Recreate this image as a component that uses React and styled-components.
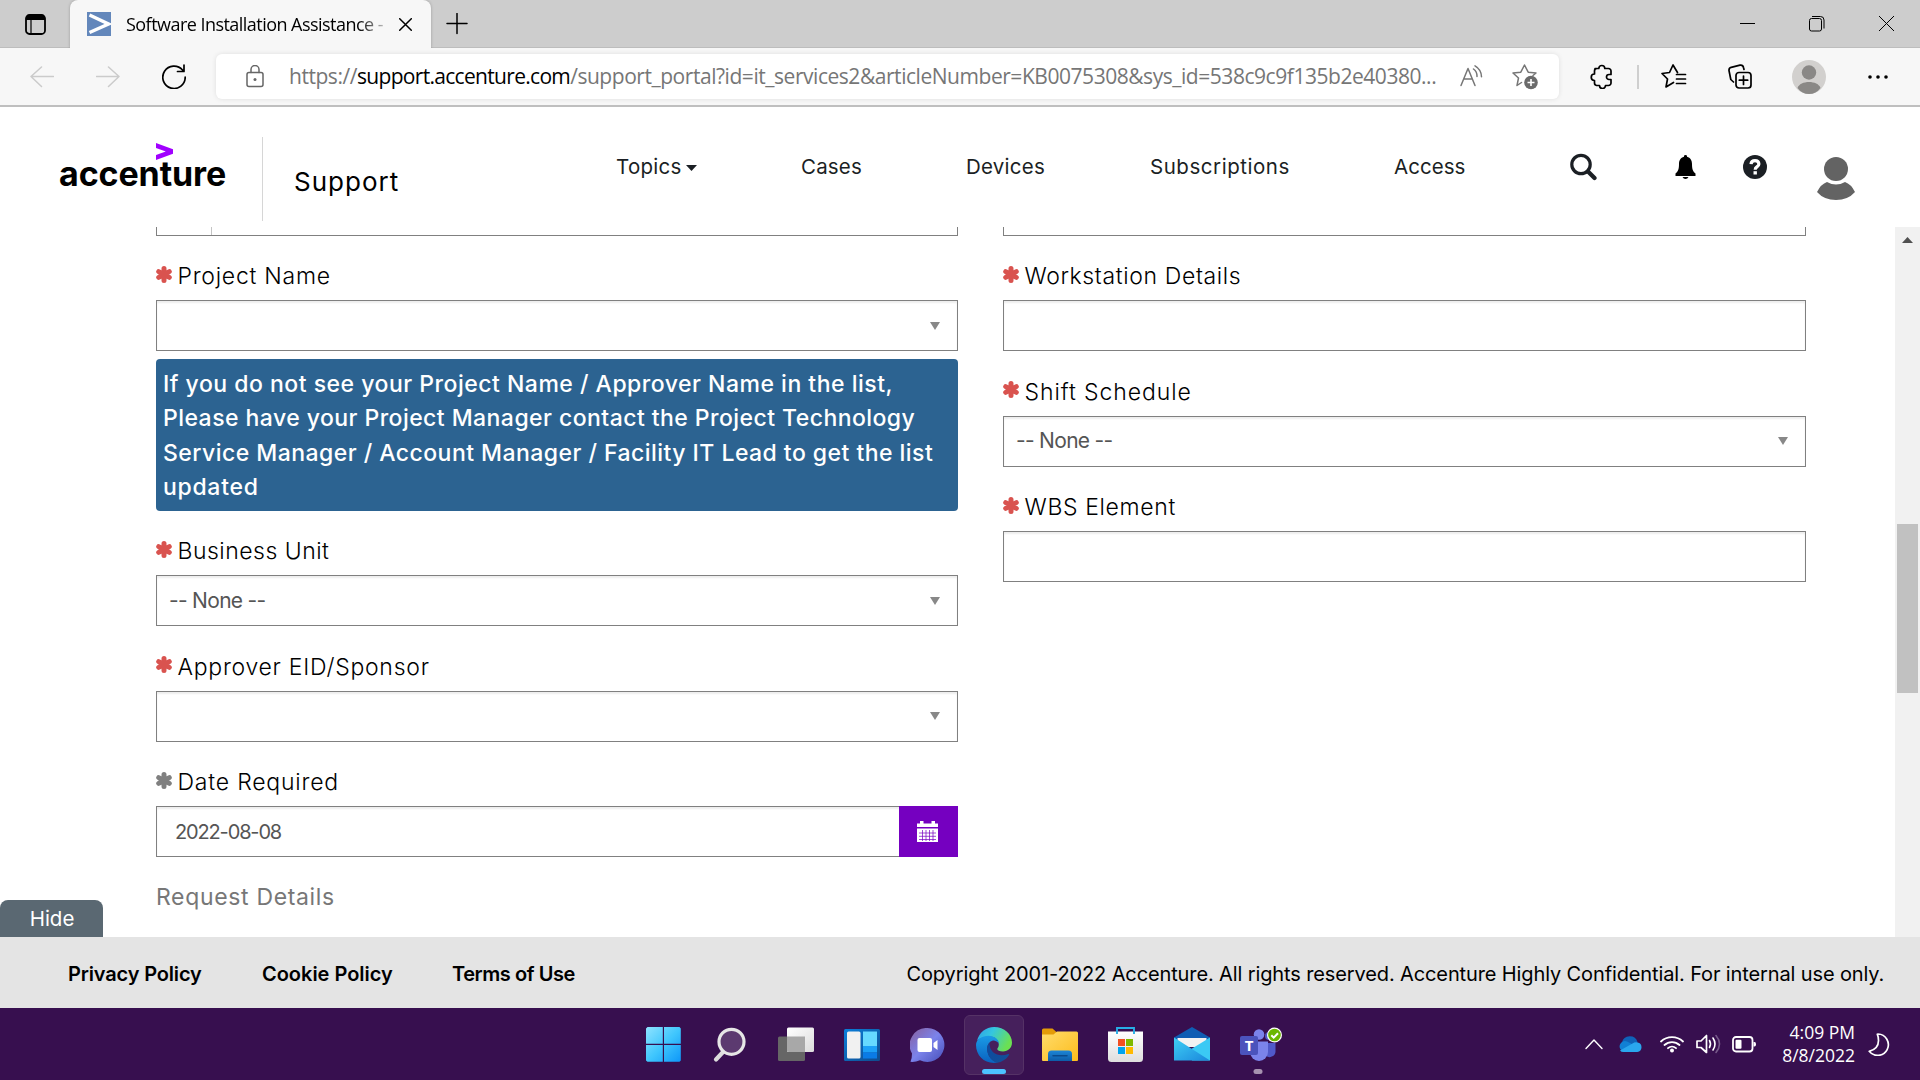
import React from "react";
import styled, { createGlobalStyle } from "styled-components";

const ui = `Inter, "Liberation Sans", sans-serif`;
const system = `"Open Sans", "Noto Sans", sans-serif`;

const GlobalStyle = createGlobalStyle`
  *, *::before, *::after { box-sizing: border-box; }
  body { margin: 0; background: #fff; overflow: hidden; }
  svg { display: block; flex: none; }
`;

const Screen = styled.div`
  width: 1920px;
  height: 1080px;
  display: flex;
  flex-direction: column;
  overflow: hidden;
  background: #fff;
  font-family: ${ui};
  color: #000;
`;

const Slot = styled.div`
  flex: none;
  display: flex;
  align-items: center;
  margin-left: ${(p) => p.$gap || 0}px;
`;

/* Browser chrome */

const TabStrip = styled.div`
  height: 48px;
  flex: none;
  display: flex;
  align-items: stretch;
  background: #cdcdcd;
  box-shadow: inset 0 -1px 0 #bdbdbd;
  padding-left: 25px;
`;

const Tab = styled.div`
  width: 361px;
  margin-left: 24px;
  display: flex;
  align-items: center;
  padding-left: 17px;
  background: #f7f7f7;
  border-radius: 8px 8px 0 0;
  box-shadow: 0 0 3px rgba(0, 0, 0, 0.25);
  clip-path: inset(0 -4px 0 -4px);
`;

const Favicon = styled.div`
  width: 24px;
  height: 24px;
  background: #6387bb;
`;

const TabTitle = styled.div`
  width: 260px;
  margin-left: 15px;
  padding-bottom: 1px;
  font: 400 18px/24px ${system};
  letter-spacing: -0.537px;
  white-space: nowrap;
  mask-image: linear-gradient(90deg, #000 232px, transparent 266px);
`;

const WindowButtons = styled.div`
  margin-left: auto;
  display: flex;
  align-items: center;
  gap: 54px;
  padding: 0 26px 1px 0;
`;

const Toolbar = styled.div`
  height: 59px;
  flex: none;
  display: flex;
  align-items: center;
  background: #f7f7f7;
  border-bottom: 2px solid #bfbfbf;
  padding-left: 30px;
`;

const AddressBar = styled.div`
  width: 1343px;
  height: 45px;
  margin-left: 30px;
  display: flex;
  align-items: center;
  padding-left: 30px;
  background: #fff;
  border-radius: 6px;
  box-shadow: 0 0 5px rgba(0, 0, 0, 0.1);
`;

const Url = styled.div`
  width: 1147px;
  flex: none;
  margin-left: 25px;
  padding-bottom: 1px;
  white-space: nowrap;
  font: 400 21px/30px ${system};
  letter-spacing: -0.457px;
  color: #767676;
`;

const Host = styled.span`
  color: #000;
  letter-spacing: -0.69px;
`;

const Divider = styled.div`
  width: 2px;
  height: 24px;
  margin-left: 23px;
  background: #cfcfcf;
`;

/* Site header */

const Header = styled.header`
  height: 120px;
  flex: none;
  display: flex;
  padding-left: 59px;
`;

const Logo = styled.div`
  width: 203px;
  padding-top: 36px;
  display: flex;
  flex-direction: column;
`;

const LogoMark = styled.svg`
  margin-left: 97px;
`;

const LogoWord = styled.div`
  font: 700 34px/28px ${ui};
  letter-spacing: -0.1px;
`;

const SiteName = styled.div`
  width: 354px;
  height: 84px;
  margin-top: 30px;
  padding-left: 31px;
  border-left: 1px solid #d6d6d6;
  font: 400 26px/90px ${ui};
  letter-spacing: 1px;
`;

const Nav = styled.nav`
  height: 119px;
  display: flex;
  align-items: center;
`;

const NavItem = styled.a`
  width: ${(p) => p.$width}px;
  display: flex;
  align-items: center;
  gap: 4px;
  font: 380 20.5px/30px ${ui};
  letter-spacing: ${(p) => p.$spacing}px;
  color: #1b1f24;
`;

const Caret = styled.svg`
  margin-top: 3px;
`;

const UserIcon = styled.svg`
  margin-top: 24px;
`;

/* Form */

const Content = styled.main`
  height: 710px;
  flex: none;
  display: flex;
  overflow: hidden;
`;

const Form = styled.div`
  width: 1895px;
  padding: 0 89px 0 156px;
  display: grid;
  grid-template-columns: 802px 803px;
  column-gap: 45px;
  align-items: start;
`;

const Column = styled.div`
  display: flex;
  flex-direction: column;
`;

const ClippedField = styled.div`
  height: 8.5px;
  border: 1px solid #808080;
  border-top: 0;
  display: flex;
`;

const ClippedAddon = styled.div`
  width: 55px;
  border-right: 1px solid #c4c4c4;
`;

const Field = styled.div`
  height: 115.5px;
  display: flex;
  flex-direction: column;
`;

const Label = styled.label`
  height: 64.5px;
  padding: 25.5px 0 9px;
  display: flex;
  gap: 5.5px;
  font: 350 23px/30px ${ui};
  letter-spacing: ${(p) => p.$spacing}px;
`;

const Asterisk = styled.svg`
  margin-top: 4.5px;
`;

const Control = styled.div`
  height: 51px;
  display: flex;
  align-items: center;
  justify-content: space-between;
  padding: 0 17px 0 12px;
  border: 1px solid #808080;
  box-shadow: inset 0 2px 2px rgba(0, 0, 0, 0.07);
  font: 400 21px/30px ${ui};
  letter-spacing: -0.7px;
  color: #555;
`;

const DateControl = styled(Control)`
  padding: 0 0 0 18px;
  font-size: 20px;
  letter-spacing: -1.15px;
`;

const DateButton = styled.div`
  width: 59px;
  height: 51px;
  margin: 0 -1px;
  padding-right: 2px;
  display: flex;
  align-items: center;
  justify-content: center;
  background: #7500c0;
`;

const Notice = styled.div`
  height: 151.5px;
  margin-top: 8px;
  padding: 8.2px 0 0 7px;
  border-radius: 4px;
  background: #2c6391;
  color: #fff;
`;

const NoticeLine = styled.div`
  white-space: nowrap;
  font: 500 23px/34.3px ${ui};
  letter-spacing: ${(p) => p.$spacing}px;
`;

const SectionTitle = styled.div`
  padding-top: 25px;
  font: 380 23px/30px ${ui};
  letter-spacing: 0.66px;
  color: #777;
`;

const ScrollTrack = styled.div`
  width: 25px;
  display: flex;
  flex-direction: column;
  align-items: center;
  padding-top: 10px;
  background: #f1f1f1;
`;

const ScrollThumb = styled.div`
  width: 21px;
  height: 169px;
  margin-top: 281px;
  background: #c1c1c1;
`;

/* Footer */

const Footer = styled.footer`
  position: relative;
  height: 71px;
  flex: none;
  display: flex;
  align-items: center;
  padding: 2px 0 0 68px;
  background: #e4e4e4;
`;

const HideTab = styled.div`
  position: absolute;
  left: 0;
  bottom: 100%;
  width: 103px;
  height: 37px;
  padding-left: 1px;
  border-radius: 8px 8px 0 0;
  background: #5a6872;
  color: #fff;
  text-align: center;
  font: 400 20.5px/37px ${ui};
`;

const FooterLink = styled.a`
  width: ${(p) => p.$width}px;
  white-space: nowrap;
  font: 600 20px/30px ${ui};
  letter-spacing: ${(p) => p.$spacing}px;
`;

const Copyright = styled.div`
  margin-left: auto;
  width: 1013.5px;
  white-space: nowrap;
  font: 380 20px/30px ${ui};
  letter-spacing: -0.12px;
`;

/* Taskbar */

const Taskbar = styled.div`
  height: 72px;
  flex: none;
  display: flex;
  align-items: center;
  background: #370f4f;
`;

const Apps = styled.div`
  display: flex;
  gap: 6px;
  margin-left: 634px;
`;

const AppButton = styled.div`
  position: relative;
  width: 60px;
  height: 60px;
  margin-top: 2px;
  display: flex;
  align-items: center;
  justify-content: center;
  border-radius: 6px;
  border: 1px solid ${(p) => (p.$active ? "#553266" : "transparent")};
  background: ${(p) => (p.$active ? "#46205c" : "transparent")};
`;

const Running = styled.div`
  position: absolute;
  left: 50%;
  bottom: 0;
  width: ${(p) => (p.$active ? 24 : 9)}px;
  height: 5px;
  transform: translateX(-50%);
  border-radius: 3px;
  background: ${(p) => (p.$active ? "#4cc2ff" : "#a692b0")};
`;

const TeamsArt = styled.svg`
  margin: -2px -7px 0 0;
`;

const TeamsLetter = styled.div`
  position: absolute;
  left: 11px;
  top: 20px;
  width: 18px;
  height: 19px;
  border-radius: 2px;
  background: #4b53bc;
  color: #fff;
  text-align: center;
  font: 700 15px/19px ${system};
`;

const Tray = styled.div`
  margin-left: auto;
  padding-right: 30px;
  display: flex;
  align-items: center;
`;

const Clock = styled.div`
  width: 99px;
  padding-bottom: 1px;
  text-align: right;
  font: 400 17.5px/23px ${system};
  color: #fff;
`;

const stroke = (color, width = 1.5) => ({
  fill: "none",
  stroke: color,
  strokeWidth: width,
  strokeLinecap: "round",
  strokeLinejoin: "round",
});

const Caption = ({ children, spacing, optional }) => (
  <Label $spacing={spacing}>
    <Asterisk width="16" height="17" viewBox="0 0 16 17">
      <path
        d="M8 2.6V14.4M2.700 5.600L13.300 11.400M13.300 5.600L2.700 11.400"
        stroke={optional ? "#808080" : "#d9534f"}
        strokeWidth="5"
        strokeLinecap="round"
      />
    </Asterisk>
    {children}
  </Label>
);

const Arrow = () => (
  <svg width="10" height="8" viewBox="0 0 10 8">
    <path d="M0 0H10L5 8Z" fill="#888" />
  </svg>
);

function BrowserTabs() {
  return (
    <TabStrip>
      <Slot>
        <svg width="21" height="21" viewBox="0 0 21 21">
          <rect x="1" y="1" width="19" height="19" rx="3.5" {...stroke("#000", 1.8)} />
          <path d="M1 4.5a3.5 3.5 0 0 1 3.500-3.500h12a3.500 3.500 0 0 1 3.500 3.500V6H1Z" fill="#000" />
          <path d="M6 6V20" stroke="#000" strokeWidth="1.2" />
        </svg>
      </Slot>
      <Tab>
        <Favicon>
          <svg width="24" height="24" viewBox="0 0 24 24">
            <path d="M2.500 3L21.500 12L2.500 20.500" fill="none" stroke="#fff" strokeWidth="3.400" />
          </svg>
        </Favicon>
        <TabTitle>Software Installation Assistance -</TabTitle>
        <Slot $gap={13}>
          <svg width="13" height="13" viewBox="0 0 13 13">
            <path d="M.7.7L12.300 12.300M12.300.7L.7 12.300" {...stroke("#000", 1.500)} />
          </svg>
        </Slot>
      </Tab>
      <Slot $gap={15}>
        <svg width="22" height="22" viewBox="0 0 22 22">
          <path d="M11 .500V20.500M1 10.500H21" {...stroke("#000", 1.500)} />
        </svg>
      </Slot>
      <WindowButtons>
        <svg width="15" height="15" viewBox="0 0 15 15">
          <path d="M0 7.500H15" stroke="#000" strokeWidth="1" />
        </svg>
        <svg width="16" height="16" viewBox="0 0 16 16">
          <rect x=".5" y="2.500" width="12" height="12.500" rx="2" fill="none" stroke="#000" />
          <path d="M3 .500H11.500a3.500 3.500 0 0 1 3.500 3.500V12.500" fill="none" stroke="#000" />
        </svg>
        <svg width="15" height="15" viewBox="0 0 15 15">
          <path d="M0 0L15 15M15 0L0 15" stroke="#000" strokeWidth="1" />
        </svg>
      </WindowButtons>
    </TabStrip>
  );
}

function BrowserToolbar() {
  return (
    <Toolbar>
      <svg width="24" height="22" viewBox="0 0 24 22">
        <path d="M11.500 1L1 10.500L11.500 20.500M1 10.500H23.500" {...stroke("#cbcbcb")} />
      </svg>
      <Slot $gap={42}>
        <svg width="24" height="22" viewBox="0 0 24 22">
          <path d="M12.500 1L23 10.500L12.500 20.500M23 10.500H.500" {...stroke("#cbcbcb")} />
        </svg>
      </Slot>
      <Slot $gap={42}>
        <svg width="24" height="25" viewBox="0 0 24 25">
          <path d="M20.500 6A11.200 11.200 0 1 0 23.200 13M22 1V7.500H15.500" {...stroke("#000", 1.700)} />
        </svg>
      </Slot>
      <AddressBar>
        <svg width="18" height="23" viewBox="0 0 18 23">
          <rect x="1" y="7.500" width="16" height="14" rx="2" {...stroke("#666")} />
          <path d="M5 7.500V4.500a4 4 0 0 1 8 0V7.500" {...stroke("#666")} />
          <circle cx="9" cy="14.500" r="1.500" fill="#666" />
        </svg>
        <Url>
          https://<Host>support.accenture.com</Host>
          /support_portal?id=it_services2&amp;articleNumber=KB0075308&amp;sys_id=538c9c9f135b2e40380...
        </Url>
        <Slot $gap={24}>
          <svg width="23" height="23" viewBox="0 0 23 23">
            <path d="M1 20.500L8 3.500L15 20.500M3.700 14H12.300" {...stroke("#767676")} />
            <path d="M13.500 4a9 9 0 0 1 3.500 7.500M15 .8a13 13 0 0 1 6.500 11" {...stroke("#767676")} />
          </svg>
        </Slot>
        <Slot $gap={29}>
          <svg width="27" height="26" viewBox="0 0 27 26">
            <path d="M9.500 18.500L5 21.500L6.500 14L1 9L8.800 8.200L12.500 1L16.200 8.200L24 9L21 11.500" {...stroke("#767676")} />
            <circle cx="19" cy="18.500" r="6.800" fill="#6a6a6a" />
            <path d="M19 15V22M15.500 18.500H22.500" stroke="#fff" strokeWidth="1.600" />
          </svg>
        </Slot>
      </AddressBar>
      <Slot $gap={31}>
        <svg width="24" height="25" viewBox="0 0 24 25">
          <path
            d="M5 4.500H8.800a3 3 0 0 1 6 0H18.500a2.500 2.500 0 0 1 2.500 2.500V10.500H19a2.200 2.200 0 0 0 0 5H21V19a2.500 2.500 0 0 1-2.500 2.500H15.500a3 3 0 0 1-6 0H6.500A2.500 2.500 0 0 1 4.500 19V16.500a3.200 3.200 0 0 1 0-6.500V7Q4.500 4.500 7 4.500"
            {...stroke("#000", 1.700)}
          />
        </svg>
      </Slot>
      <Divider />
      <Slot $gap={22}>
        <svg width="26" height="25" viewBox="0 0 26 25">
          <path d="M16.500 8.500L12 1L8.500 8.500L1 9.500L6.500 15L5 23L12.500 18.500M15.500 10.500H24.500M15.500 15H24.500M15.500 19.500H24.500" {...stroke("#000", 1.700)} />
        </svg>
      </Slot>
      <Slot $gap={41}>
        <svg width="24" height="25" viewBox="0 0 24 25">
          <rect x="8" y="8.500" width="15" height="15.500" rx="3" {...stroke("#000", 1.700)} />
          <path d="M15.500 12V20.500M11.300 16.200H19.700M5.500 18L2.800 15.500L1 6.500Q.8 4 3.200 3.300L12 1.200Q15 .8 15.500 3.500L16 5.500" {...stroke("#000", 1.700)} />
        </svg>
      </Slot>
      <Slot $gap={40}>
        <svg width="34" height="34" viewBox="0 0 34 34">
          <circle cx="17" cy="17" r="17" fill="#d2d0ce" />
          <circle cx="17" cy="12.500" r="7.200" fill="#8a8886" />
          <path d="M5.500 28C8 20 26 20 28.500 28Q24 34 17 34T5.500 28Z" fill="#8a8886" />
        </svg>
      </Slot>
      <Slot $gap={42}>
        <svg width="20" height="4" viewBox="0 0 20 4">
          <circle cx="2" cy="2" r="1.800" />
          <circle cx="10" cy="2" r="1.800" />
          <circle cx="18" cy="2" r="1.800" />
        </svg>
      </Slot>
    </Toolbar>
  );
}

function SiteHeader() {
  return (
    <Header>
      <Logo>
        <LogoMark width="17" height="17" viewBox="0 0 17 17">
          <path d="M0 0L17 6.300V10.700L0 17V12L9.800 8.500L0 5Z" fill="#a100ff" />
        </LogoMark>
        <LogoWord>accenture</LogoWord>
      </Logo>
      <SiteName>Support</SiteName>
      <Nav>
        <NavItem $width={185} $spacing={0.27}>
          Topics
          <Caret width="11" height="6" viewBox="0 0 11 6">
            <path d="M0 0H11L5.500 6Z" fill="#1b1f24" />
          </Caret>
        </NavItem>
        <NavItem $width={165} $spacing={0.18}>Cases</NavItem>
        <NavItem $width={184} $spacing={0.25}>Devices</NavItem>
        <NavItem $width={244} $spacing={0.54}>Subscriptions</NavItem>
        <NavItem $width={176} $spacing={0.03}>Access</NavItem>
        <svg width="27" height="29" viewBox="0 0 27 29">
          <circle cx="11" cy="12.500" r="9.200" fill="none" stroke="#1b1f24" strokeWidth="3.200" />
          <path d="M18 19.500L24.500 26" stroke="#1b1f24" strokeWidth="4.200" strokeLinecap="round" />
        </svg>
        <Slot $gap={78}>
          <svg width="21" height="24" viewBox="0 0 21 24">
            <path d="M10.500 0a1.500 1.500 0 0 1 1.500 1.700C15.500 2.500 17 5.500 17 9C17 14.500 18 16.500 20.500 18.500V21H.500V18.500C3 16.500 4 14.500 4 9C4 5.500 5.500 2.500 9 1.700A1.500 1.500 0 0 1 10.500 0ZM7.500 22H13.500Q12.500 24 10.500 24T7.500 22Z" />
          </svg>
        </Slot>
        <Slot $gap={47}>
          <svg width="24" height="24" viewBox="0 0 24 24">
            <circle cx="12" cy="12" r="12" fill="#1b1f24" />
            <path d="M8 9.200Q8.300 5.700 12 5.700T15.900 9Q15.900 10.800 13.800 12Q12.200 12.900 12.200 14.800" fill="none" stroke="#fff" strokeWidth="3.200" />
            <path d="M10.500 16.200H13.900V19.500H10.500Z" fill="#fff" />
          </svg>
        </Slot>
        <Slot $gap={50}>
          <UserIcon width="38" height="43" viewBox="0 0 38 43">
            <circle cx="19" cy="12" r="12" fill="#636363" />
            <path d="M10 25Q19 30 28 25Q34 27 38 35Q31 43 19 43T0 35Q4 27 10 25Z" fill="#636363" />
          </UserIcon>
        </Slot>
      </Nav>
    </Header>
  );
}

const notice = [
  ["If you do not see your Project Name / Approver Name in the list,", 0.5],
  ["Please have your Project Manager contact the Project Technology", 0.445],
  ["Service Manager / Account Manager / Facility IT Lead to get the list", 0.46],
  ["updated", 0.7],
];

function RequestForm() {
  return (
    <Content>
      <Form>
        <Column>
          <ClippedField>
            <ClippedAddon />
          </ClippedField>
          <Field>
            <Caption spacing={0.75}>Project Name</Caption>
            <Control>
              <span />
              <Arrow />
            </Control>
          </Field>
          <Notice>
            {notice.map(([text, spacing]) => (
              <NoticeLine key={text} $spacing={spacing}>{text}</NoticeLine>
            ))}
          </Notice>
          <Field>
            <Caption spacing={0.5}>Business Unit</Caption>
            <Control>
              -- None --
              <Arrow />
            </Control>
          </Field>
          <Field>
            <Caption spacing={0.74}>Approver EID/Sponsor</Caption>
            <Control>
              <span />
              <Arrow />
            </Control>
          </Field>
          <Field>
            <Caption spacing={0.8} optional>Date Required</Caption>
            <DateControl>
              2022-08-08
              <DateButton>
                <svg width="21" height="22" viewBox="0 0 21 22">
                  <path d="M0 2.500H3V0H6.500V2.500H14.500V0H18V2.500H21V6H0ZM0 7.500H21V21H0Z" fill="#fff" />
                  <path d="M2 12H19M2 15.300H19M2 18.500H19M5.500 9V20M9 9V20M12.500 9V20M16 9V20" stroke="#7500c0" strokeWidth=".7" />
                </svg>
              </DateButton>
            </DateControl>
          </Field>
          <SectionTitle>Request Details</SectionTitle>
        </Column>
        <Column>
          <ClippedField />
          <Field>
            <Caption spacing={0.63}>Workstation Details</Caption>
            <Control />
          </Field>
          <Field>
            <Caption spacing={0.9}>Shift Schedule</Caption>
            <Control>
              -- None --
              <Arrow />
            </Control>
          </Field>
          <Field>
            <Caption spacing={0.65}>WBS Element</Caption>
            <Control />
          </Field>
        </Column>
      </Form>
      <ScrollTrack>
        <svg width="11" height="6" viewBox="0 0 11 6">
          <path d="M5.500 0L11 6H0Z" fill="#505050" />
        </svg>
        <ScrollThumb />
      </ScrollTrack>
    </Content>
  );
}

function SiteFooter() {
  return (
    <Footer>
      <HideTab>Hide</HideTab>
      <FooterLink $width={194} $spacing={-0.16}>Privacy Policy</FooterLink>
      <FooterLink $width={190} $spacing={-0.02}>Cookie Policy</FooterLink>
      <FooterLink $width={140} $spacing={-0.44}>Terms of Use</FooterLink>
      <Copyright>
        Copyright 2001-2022 Accenture. All rights reserved. Accenture Highly Confidential. For internal use only.
      </Copyright>
    </Footer>
  );
}

const StartIcon = () => (
  <svg width="36" height="36" viewBox="0 0 36 36">
    <defs>
      <linearGradient id="start" x1="0" y1="0" x2="36" y2="36" gradientUnits="userSpaceOnUse">
        <stop offset="0" stopColor="#8fe3ff" />
        <stop offset=".5" stopColor="#3fc6fd" />
        <stop offset="1" stopColor="#0a93f8" />
      </linearGradient>
    </defs>
    <path d="M1.500 0H16.800V16.800H0V1.500ZM18 0H33.500L34.800 1.500V16.800H18ZM0 18H16.800V34.800H1.500L0 33.500ZM18 18H34.800V33.500L33.500 34.800H18Z" fill="url(#start)" />
  </svg>
);

const SearchIcon = () => (
  <svg width="34" height="36" viewBox="0 0 34 36">
    <path d="M10.500 24.500L3 32.500" stroke="#dcdcdc" strokeWidth="4.200" strokeLinecap="round" />
    <circle cx="18.500" cy="14.800" r="12.500" fill="#5c3a70" stroke="#e6e6e6" strokeWidth="3.200" />
  </svg>
);

const TaskViewIcon = () => (
  <svg width="36" height="36" viewBox="0 0 36 36">
    <defs>
      <linearGradient id="pane" x1="0" y1="0" x2="1" y2="1">
        <stop offset="0" stopColor="#fff" />
        <stop offset="1" stopColor="#dcdcdc" />
      </linearGradient>
    </defs>
    <rect x="0" y="9.500" width="27" height="24.500" rx="1.500" fill="#666" />
    <rect x="9" y=".5" width="27" height="24.500" rx="1.500" fill="url(#pane)" />
    <path d="M9 9.500H27V25H10.500L9 23.500Z" fill="#a8a8a8" />
  </svg>
);

const WidgetsIcon = () => (
  <svg width="36" height="32" viewBox="0 0 36 32">
    <defs>
      <linearGradient id="board" x1="0" y1="0" x2="1" y2="1">
        <stop offset="0" stopColor="#0a7fdb" />
        <stop offset="1" stopColor="#104a8c" />
      </linearGradient>
    </defs>
    <rect width="36" height="32" rx="1.500" fill="url(#board)" />
    <rect x="3" y="2.500" width="13.500" height="27" rx="1.500" fill="#f1f1f1" />
    <path d="M19 2.500H33V17H19Z" fill="#66d9ff" />
    <path d="M19 17H33V23.500H19Z" fill="#1ca0f7" />
    <path d="M19 23.500H33V29.500H19Z" fill="#0a7be6" />
  </svg>
);

const ChatIcon = () => (
  <svg width="36" height="35" viewBox="0 0 36 35">
    <defs>
      <linearGradient id="chat" x1="0" y1="0" x2="1" y2="1">
        <stop offset="0" stopColor="#8a5f9e" />
        <stop offset=".25" stopColor="#8171c4" />
        <stop offset=".5" stopColor="#7b83eb" />
        <stop offset="1" stopColor="#464eb8" />
      </linearGradient>
    </defs>
    <path d="M17.500 0A17 17 0 1 1 10 32.300Q5 34.300.500 33.800Q2 30.500 2 25.500A17 17 0 0 1 17.500 0Z" fill="url(#chat)" />
    <rect x="7.500" y="10" width="14.500" height="14" rx="2" fill="#fff" />
    <path d="M23.500 15L27.500 12V22L23.500 19Z" fill="#fff" />
  </svg>
);

const EdgeIcon = () => (
  <svg width="36" height="36" viewBox="0 0 36 36">
    <defs>
      <linearGradient id="edgeTop" x1="0" y1="0" x2="1" y2=".4">
        <stop offset="0" stopColor="#2f9de8" />
        <stop offset=".45" stopColor="#34c6e0" />
        <stop offset="1" stopColor="#6be053" />
      </linearGradient>
      <linearGradient id="edgeLeft" x1="0" y1="0" x2="0" y2="1">
        <stop offset="0" stopColor="#1a9be6" />
        <stop offset="1" stopColor="#0a62c0" />
      </linearGradient>
      <linearGradient id="edgeDark" x1="0" y1="0" x2="1" y2="1">
        <stop offset="0" stopColor="#0c4aa0" />
        <stop offset="1" stopColor="#124f98" />
      </linearGradient>
    </defs>
    <path d="M1 14C3 5.500 10 0 18 0C28.500 0 36 7.500 36 15.500C36 21 32 24.500 27 24.500C23.500 24.500 21.300 23.400 21.300 22C21.300 21 22.800 20.300 22.800 17.500C22.800 13 18.500 9.500 13.500 9.500C7 9.500 1.500 12.500 1 14Z" fill="url(#edgeTop)" />
    <path d="M0 18C0 12.500 6 8.800 12.500 8.800C18.500 8.800 22.800 12.500 22.800 16.500C21 14 18.500 13.300 17 13.500C12.500 14.500 10.500 19 11.500 24.500C12.500 30 17 35 22 35.500C10 38 0 29.500 0 18Z" fill="url(#edgeLeft)" />
    <path d="M13.500 15.500C8.500 21 11.500 32 20.500 35.800C26 35.500 31 31.500 33 28C33.400 27.200 32.900 26.700 32.100 27C24 30.500 13 27 13.500 15.500Z" fill="url(#edgeDark)" />
  </svg>
);

const FolderIcon = () => (
  <svg width="36" height="34" viewBox="0 0 36 34">
    <defs>
      <linearGradient id="folder" x1="0" y1="0" x2="1" y2="1">
        <stop offset="0" stopColor="#ffdc6b" />
        <stop offset="1" stopColor="#fdbc1c" />
      </linearGradient>
      <linearGradient id="tray" x1="0" y1="0" x2="0" y2="1">
        <stop offset="0" stopColor="#1d86d6" />
        <stop offset="1" stopColor="#0d5ca8" />
      </linearGradient>
    </defs>
    <path d="M0 2Q0 .500 1.500.500H10.500L15 4.500V12H0Z" fill="#e39b08" />
    <path d="M0 6.500H11.500L15 3.500H34.500Q36 3.500 36 5V32Q36 33 35 33H1Q0 33 0 32Z" fill="url(#folder)" />
    <path d="M6 33V26Q6 22.500 9.500 22.500H26.500Q30 22.500 30 26V33Z" fill="url(#tray)" />
    <path d="M11 27.800H25" stroke="#0a4a8c" strokeWidth="1.500" strokeLinecap="round" />
  </svg>
);

const StoreIcon = () => (
  <svg width="36" height="36" viewBox="0 0 36 36">
    <defs>
      <linearGradient id="bag" x1="0" y1="0" x2="0" y2="1">
        <stop offset="0" stopColor="#fff" />
        <stop offset="1" stopColor="#dedede" />
      </linearGradient>
    </defs>
    <path d="M0 4.500H35V31.500Q35 35 31.500 35H3.500Q0 35 0 31.500Z" fill="url(#bag)" />
    <path d="M9 7V1H26V7" fill="none" stroke="#27aee6" strokeWidth="1.900" />
    <path d="M10 12H17V19H10Z" fill="#f25022" />
    <path d="M18 12H25V19H18Z" fill="#7fba00" />
    <path d="M10 20H17V27H10Z" fill="#00a4ef" />
    <path d="M18 20H25V27H18Z" fill="#ffb900" />
  </svg>
);

const MailIcon = () => (
  <svg width="36" height="36" viewBox="0 0 36 36">
    <defs>
      <linearGradient id="mail" x1="0" y1="0" x2="1" y2="1">
        <stop offset="0" stopColor="#3fd0f5" />
        <stop offset="1" stopColor="#1a86dc" />
      </linearGradient>
    </defs>
    <path d="M0 10.500L18 0L36 10.500V20H0Z" fill="#0f5db3" />
    <path d="M3.500 11H32.500V20H3.500Z" fill="#f2f2f2" />
    <path d="M36 10.500V33.500H18L14 24Z" fill="#3bc9f4" />
    <path d="M0 10.500L36 33.500H0Z" fill="url(#mail)" />
  </svg>
);

const TeamsIcon = () => (
  <>
    <TeamsArt width="43" height="35" viewBox="0 0 43 35">
      <circle cx="29" cy="9" r="4" fill="#5059c9" />
      <path d="M25 16H35.500V23.500A6 6 0 0 1 25 28Z" fill="#5059c9" />
      <circle cx="19" cy="7.500" r="5.300" fill="#7b83eb" />
      <path d="M10 14.500H28V25A9 9 0 0 1 10 25Z" fill="#7b83eb" />
      <circle cx="34.500" cy="8" r="7.500" fill="#fff" />
      <circle cx="34.500" cy="8" r="6.300" fill="#6bb700" />
      <path d="M31.300 8.200L33.700 10.600L38 6.200" fill="none" stroke="#fff" strokeWidth="2" />
    </TeamsArt>
    <TeamsLetter>T</TeamsLetter>
  </>
);

function WindowsTaskbar() {
  return (
    <Taskbar>
      <Apps>
        <AppButton><StartIcon /></AppButton>
        <AppButton><SearchIcon /></AppButton>
        <AppButton><TaskViewIcon /></AppButton>
        <AppButton><WidgetsIcon /></AppButton>
        <AppButton><ChatIcon /></AppButton>
        <AppButton $active><EdgeIcon /><Running $active /></AppButton>
        <AppButton><FolderIcon /></AppButton>
        <AppButton><StoreIcon /></AppButton>
        <AppButton><MailIcon /></AppButton>
        <AppButton><TeamsIcon /><Running /></AppButton>
      </Apps>
      <Tray>
        <svg width="18" height="11" viewBox="0 0 18 11">
          <path d="M1 9.500L9 1L17 9.500" {...stroke("#fff", 1.400)} />
        </svg>
        <Slot $gap={15}>
          <svg width="24" height="16" viewBox="0 0 24 16">
            <path d="M4 6.500A8 8 0 0 1 19.500 6L19 10L8 12Z" fill="#0f62b8" />
            <path d="M5 15.500A5.200 5.200 0 1 1 9 5.500L18 10L10 16Z" fill="#1180d4" />
            <path d="M2 14.500L14.500 7.600A6 6 0 0 1 19.500 6.500A4.800 4.800 0 0 1 19.300 16H5.500Q3 16 2 14.500Z" fill="#2aa7ee" />
          </svg>
        </Slot>
        <Slot $gap={18}>
          <svg width="24" height="18" viewBox="0 0 24 18">
            <path d="M1 6.500A16 16 0 0 1 23 6.500M4.500 10A11 11 0 0 1 19.500 10M8 13.200A6 6 0 0 1 16 13.200" {...stroke("#fff", 1.800)} />
            <circle cx="12" cy="15.500" r="2" fill="#fff" />
          </svg>
        </Slot>
        <Slot $gap={12}>
          <svg width="25" height="20" viewBox="0 0 25 20">
            <path d="M1 7H5L10.500 1.500V18.500L5 13.500H1Z" {...stroke("#fff", 1.700)} />
            <path d="M13.500 6.500Q15.500 10 13.500 13.500M17 4Q21 10 17 16" {...stroke("#fff", 1.600)} />
            <path d="M20 1.500Q27 10 20 18.500" {...stroke("#76598a", 1.600)} />
          </svg>
        </Slot>
        <Slot $gap={11}>
          <svg width="24" height="17" viewBox="0 0 24 17">
            <rect x="1" y="1" width="19.500" height="14.500" rx="3" {...stroke("#fff", 1.800)} />
            <rect x="3.500" y="3.800" width="6" height="9" rx="1" fill="#fff" />
            <path d="M21.500 6H22.500Q24 6 24 8.200T22.500 10.500H21.500Z" fill="#fff" />
          </svg>
        </Slot>
        <Clock>
          4:09 PM
          <br />
          8/8/2022
        </Clock>
        <Slot $gap={13}>
          <svg width="22" height="23" viewBox="0 0 22 23">
            <path d="M10 1A10.700 10.700 0 1 1 1.200 18.300Q10.500 16 10.500 7.500Q10.500 4 9.300 1.200Z" {...stroke("#fff", 1.700)} />
          </svg>
        </Slot>
      </Tray>
    </Taskbar>
  );
}

export default function App() {
  return (
    <>
      <GlobalStyle />
      <Screen>
        <BrowserTabs />
        <BrowserToolbar />
        <SiteHeader />
        <RequestForm />
        <SiteFooter />
        <WindowsTaskbar />
      </Screen>
    </>
  );
}
